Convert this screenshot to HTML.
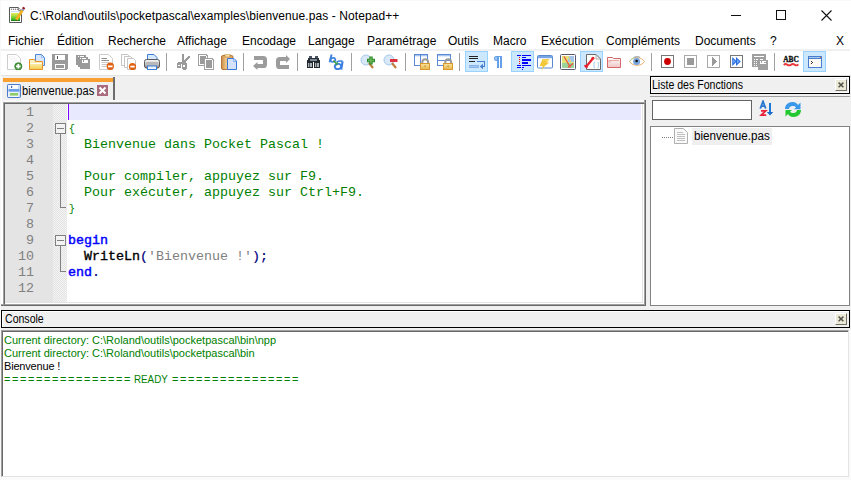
<!DOCTYPE html>
<html><head><meta charset="utf-8">
<style>
*{box-sizing:border-box;margin:0;padding:0}
html,body{width:851px;height:480px;overflow:hidden;background:#fff;font-family:"Liberation Sans",sans-serif;position:relative}
.a{position:absolute;display:block}
.t{position:absolute;white-space:pre;font-size:12px;line-height:14px;color:#000}
.m{position:absolute;white-space:pre;font-family:"Liberation Mono",monospace;font-size:13.33px;line-height:16px;left:68px}
.ln{position:absolute;white-space:pre;font-family:"Liberation Mono",monospace;font-size:13.33px;line-height:16px;color:#808080;text-align:right;left:5px;width:29px}
.cm{color:#008000}
.kw{color:#0000ff;-webkit-text-stroke:0.45px #0000ff}
.op{color:#000080;-webkit-text-stroke:0.2px #000080}
.id{color:#000;-webkit-text-stroke:0.35px #000}
.st{color:#808080}
.ct{position:absolute;white-space:pre;font-size:11px;line-height:13px;left:4px}
</style></head><body>
<div class="a" style="left:0;top:0;width:851px;height:1px;background:#f8f8f8"></div>
<div class="a" style="left:0;top:0;width:1px;height:480px;background:#f8f8f8"></div>
<!-- app icon -->
<svg class="a" style="left:6px;top:4px" width="22" height="22" viewBox="0 0 22 22">
<defs><linearGradient id="ag" x1="0" y1="0" x2="0" y2="1"><stop offset="0" stop-color="#e8e860"/><stop offset="0.35" stop-color="#a8dc40"/><stop offset="0.8" stop-color="#40b828"/><stop offset="1" stop-color="#107010"/></linearGradient></defs>
<path d="M3.5 3.5H12.5L15.5 6.5V18.5H3.5Z" fill="#fff" stroke="#5a5a5a"/>
<circle cx="5.5" cy="5.3" r="0.7" fill="#777"/><circle cx="7.5" cy="5.3" r="0.7" fill="#777"/><circle cx="9.5" cy="5.3" r="0.7" fill="#777"/><circle cx="11.5" cy="5.3" r="0.7" fill="#777"/>
<path d="M12.5 3.5V6.5H15.5" fill="#e8e8e8" stroke="#888"/>
<rect x="5" y="7.3" width="9" height="0.8" fill="#b8d0e8"/>
<rect x="5" y="9" width="9" height="8" fill="url(#ag)"/>
<path d="M10.3 15.8L16.6 6" stroke="#f0b020" stroke-width="2.8"/>
<path d="M9.6 17L10.3 15.6L11 16.2Z" fill="#604020"/>
<path d="M16.3 6.4L17.4 4.8" stroke="#8aa0b8" stroke-width="2.6"/>
<path d="M17.2 4.9L18.2 3.4" stroke="#a00818" stroke-width="2.6"/>
</svg>
<div class="t" style="left:30px;top:9px;letter-spacing:0.08px">C:\Roland\outils\pocketpascal\examples\bienvenue.pas - Notepad++</div>
<!-- window controls -->
<div class="a" style="left:731px;top:15px;width:10px;height:1px;background:#111"></div>
<div class="a" style="left:776px;top:10px;width:10px;height:10px;border:1px solid #111"></div>
<svg class="a" style="left:821px;top:10px" width="11" height="11" viewBox="0 0 11 11"><path d="M0.5 0.5L10.5 10.5M10.5 0.5L0.5 10.5" stroke="#111" stroke-width="1.1"/></svg>
<!-- menu -->
<div class="t" style="left:8px;top:34px">Fichier</div>
<div class="t" style="left:57px;top:34px">Édition</div>
<div class="t" style="left:108px;top:34px">Recherche</div>
<div class="t" style="left:177px;top:34px">Affichage</div>
<div class="t" style="left:242px;top:34px">Encodage</div>
<div class="t" style="left:308px;top:34px">Langage</div>
<div class="t" style="left:367px;top:34px">Paramétrage</div>
<div class="t" style="left:448px;top:34px">Outils</div>
<div class="t" style="left:493px;top:34px">Macro</div>
<div class="t" style="left:541px;top:34px">Exécution</div>
<div class="t" style="left:606px;top:34px">Compléments</div>
<div class="t" style="left:695px;top:34px">Documents</div>
<div class="t" style="left:770px;top:34px">?</div>
<div class="t" style="left:836px;top:34px">X</div>
<div class="a" style="left:1px;top:49px;width:849px;height:2px;background:#f0f0f0"></div>
<!-- toolbar -->
<svg class="a" style="left:7px;top:54px" width="16" height="16" viewBox="0 0 16 16"><path d="M0.5 0.5H9.5L13.5 4.5V15.5H0.5Z" fill="#fff" stroke="#cdcdcd"/>
<path d="M2 3H8M2 5H10M6 7H10" stroke="#ececec" stroke-width="0.8"/>
<circle cx="11.3" cy="12.3" r="3.6" fill="#4e9e40" stroke="#2c7a28" stroke-width="0.8"/>
<path d="M11.3 10V14.6M9 12.3H13.6" stroke="#fff" stroke-width="1.8"/></svg>
<svg class="a" style="left:29px;top:54px" width="16" height="16" viewBox="0 0 16 16"><defs><linearGradient id="og" x1="0" y1="0" x2="0" y2="1"><stop offset="0" stop-color="#fff6d0"/><stop offset="0.5" stop-color="#fbe79a"/><stop offset="1" stop-color="#f2cf50"/></linearGradient></defs>
<path d="M6.5 0.5H12.5L15.5 3.5V11.5H6.5Z" fill="#d8e6fc" stroke="#4f86d8"/>
<path d="M12.5 0.5V3.5H15.5" fill="none" stroke="#8ab4ec" stroke-width="0.8"/>
<path d="M0.5 5.5H5.5L6.5 7.5H13.5V15.5H0.5Z" fill="url(#og)" stroke="#e8922a"/>
<path d="M1.5 9.5H12.5" stroke="#fff" stroke-width="1"/></svg>
<svg class="a" style="left:52px;top:54px" width="16" height="16" viewBox="0 0 16 16" shape-rendering="crispEdges"><rect x="0" y="0" width="16" height="16" fill="#9a9a9a"/>
<rect x="3" y="1" width="10" height="5" fill="#fff"/>
<rect x="5" y="2" width="1" height="3" fill="#555"/>
<rect x="3" y="10" width="10" height="5" fill="#fff"/>
<rect x="4" y="11" width="8" height="3" fill="#9a9a9a"/>
<rect x="15" y="15" width="1" height="1" fill="#fff"/></svg>
<svg class="a" style="left:75px;top:54px" width="16" height="16" viewBox="0 0 16 16" shape-rendering="crispEdges"><rect x="1" y="1" width="10" height="10" fill="#9a9a9a"/>
<rect x="3" y="3" width="10" height="10" fill="#9a9a9a" stroke="#fff" stroke-width="0"/>
<rect x="5" y="5" width="10" height="10" fill="#9a9a9a"/>
<rect x="3" y="2" width="1" height="1" fill="#fff"/><rect x="5" y="2" width="4" height="1" fill="#fff"/>
<rect x="5" y="4" width="1" height="1" fill="#fff"/><rect x="7" y="4" width="4" height="1" fill="#fff"/>
<rect x="7" y="6" width="6" height="3" fill="#fff"/><rect x="8" y="6" width="1" height="2" fill="#9a9a9a"/></svg>
<svg class="a" style="left:98px;top:54px" width="16" height="16" viewBox="0 0 16 16"><path d="M1.5 0.5H10.5L14.5 4.5V15.5H1.5Z" fill="#fff" stroke="#cccccc"/>
<path d="M3.5 4.5H9M3.5 6.5H11" stroke="#808080" stroke-width="0.9"/><path d="M3.5 8.5H11M3.5 10.5H9M3.5 12.5H8" stroke="#c4c4c4" stroke-width="0.9"/>
<circle cx="12.3" cy="12.3" r="3.7" fill="#e06010"/>
<rect x="10" y="11.5" width="4.6" height="1.8" fill="#fff"/></svg>
<svg class="a" style="left:121px;top:54px" width="16" height="16" viewBox="0 0 16 16"><path d="M0.5 0.5H6.5L8.5 2.5V11.5H0.5Z" fill="#fff" stroke="#c4c4c4"/>
<path d="M3.5 2.5H9.5L11.5 4.5V13.5H3.5Z" fill="#fff" stroke="#c4c4c4"/>
<path d="M6.5 4.5H12.5L14.5 6.5V15.5H6.5Z" fill="#fff" stroke="#c4c4c4"/>
<circle cx="11.5" cy="12.5" r="3.6" fill="#e06010"/>
<rect x="9.3" y="11.7" width="4.4" height="1.8" fill="#fff"/></svg>
<svg class="a" style="left:144px;top:54px" width="16" height="16" viewBox="0 0 16 16"><defs><linearGradient id="pr" x1="0" y1="0" x2="0" y2="1"><stop offset="0" stop-color="#fafafa"/><stop offset="0.45" stop-color="#d0d0d0"/><stop offset="0.75" stop-color="#a8a8a8"/><stop offset="1" stop-color="#707070"/></linearGradient></defs>
<path d="M3.5 0.5H10L13 3.5V8H3.5Z" fill="#d8e8fc" stroke="#3d7fd6"/>
<rect x="0.5" y="5.5" width="15" height="8.5" rx="2" fill="url(#pr)" stroke="#5a5a5a" stroke-width="1"/>
<rect x="2" y="8" width="12" height="2.5" fill="#b8b8b8"/>
<rect x="3.5" y="12" width="9" height="3.5" fill="#eef4fc" stroke="#3d7fd6"/></svg>
<div class="a" style="left:166px;top:53px;width:1px;height:18px;background:#a0a0a0"></div>
<div class="a" style="left:243px;top:53px;width:1px;height:18px;background:#a0a0a0"></div>
<div class="a" style="left:297px;top:53px;width:1px;height:18px;background:#a0a0a0"></div>
<div class="a" style="left:351px;top:53px;width:1px;height:18px;background:#a0a0a0"></div>
<div class="a" style="left:405px;top:53px;width:1px;height:18px;background:#a0a0a0"></div>
<div class="a" style="left:459px;top:53px;width:1px;height:18px;background:#a0a0a0"></div>
<div class="a" style="left:651px;top:53px;width:1px;height:18px;background:#a0a0a0"></div>
<div class="a" style="left:774px;top:53px;width:1px;height:18px;background:#a0a0a0"></div>
<svg class="a" style="left:175px;top:54px" width="16" height="16" viewBox="0 0 16 16" shape-rendering="crispEdges"><rect x="7" y="0" width="2" height="9" fill="#9a9a9a"/>
<rect x="13" y="2" width="2" height="2" fill="#9a9a9a"/><rect x="12" y="3" width="2" height="2" fill="#9a9a9a"/>
<rect x="11" y="4" width="2" height="2" fill="#9a9a9a"/><rect x="10" y="5" width="2" height="2" fill="#9a9a9a"/>
<rect x="9" y="6" width="2" height="2" fill="#9a9a9a"/><rect x="8" y="7" width="2" height="2" fill="#9a9a9a"/>
<rect x="3" y="8" width="8" height="2" fill="#9a9a9a"/>
<rect x="2" y="9" width="4" height="5" fill="#9a9a9a"/><rect x="3" y="11" width="2" height="1" fill="#fff"/>
<rect x="7" y="9" width="5" height="6" fill="#9a9a9a"/><rect x="8" y="11" width="2" height="2" fill="#fff"/>
<rect x="8" y="15" width="3" height="1" fill="#9a9a9a"/></svg>
<svg class="a" style="left:198px;top:54px" width="16" height="16" viewBox="0 0 16 16" shape-rendering="crispEdges"><path d="M0 0H8L10 2V12H0Z" fill="#a0a0a0"/><path d="M1 1H7L9 3V11H1Z" fill="#fff"/><path d="M2 2H7L8 3V10H2Z" fill="#9a9a9a"/>
<path d="M6 4H14L16 6V16H6Z" fill="#a0a0a0"/><path d="M7 5H13L15 7V15H7Z" fill="#fff"/><path d="M8 6H13L14 7V14H8Z" fill="#9a9a9a"/></svg>
<svg class="a" style="left:221px;top:54px" width="16" height="16" viewBox="0 0 16 16"><defs><linearGradient id="pg" x1="0" x2="1"><stop offset="0" stop-color="#c88a48"/><stop offset="0.4" stop-color="#f0c888"/><stop offset="1" stop-color="#d89858"/></linearGradient></defs>
<rect x="0.5" y="1.5" width="11.5" height="14" rx="1.5" fill="url(#pg)" stroke="#b87838"/>
<rect x="4" y="0" width="5" height="3" fill="#f8e0a0" stroke="#c08040" stroke-width="0.6"/>
<path d="M6.5 4.5H13L15.5 7V15.5H6.5Z" fill="#d4e2fc" stroke="#3a78d8"/>
<path d="M12.5 4.5V7.5H15.5" fill="none" stroke="#7aa8e8" stroke-width="0.8"/></svg>
<svg class="a" style="left:252px;top:54px" width="16" height="16" viewBox="0 0 16 16"><path d="M2 2H11.3Q15 2 15 5.6V10.4Q15 14 11.3 14H5.5V16L1 12L5.5 8V10H10.5Q11 10 11 9.5V6.5Q11 6 10.5 6H2Z" fill="#9c9c9c"/></svg>
<svg class="a" style="left:275px;top:54px" width="16" height="16" viewBox="0 0 16 16"><path d="M11 3H4.7Q1 3 1 6.6V11.4Q1 15 4.7 15H14V11H5.5Q5 11 5 10.5V7.5Q5 7 5.5 7H11V9L15 5L11 1Z" fill="#9c9c9c"/></svg>
<svg class="a" style="left:306px;top:54px" width="16" height="16" viewBox="0 0 16 16" shape-rendering="crispEdges"><rect x="3" y="2" width="3" height="3" fill="#4a5260"/><rect x="9" y="2" width="3" height="3" fill="#4a5260"/>
<rect x="2" y="4" width="11" height="4" fill="#2a3038"/>
<rect x="1" y="6" width="6" height="8" fill="#22282e"/><rect x="8" y="6" width="6" height="8" fill="#22282e"/>
<rect x="4" y="5" width="7" height="2" fill="#7a8898"/>
<rect x="2" y="9" width="4" height="4" fill="#a8b0b8"/><rect x="9" y="9" width="4" height="4" fill="#a8b0b8"/>
<rect x="3" y="9" width="1" height="4" fill="#505860"/><rect x="10" y="9" width="1" height="4" fill="#505860"/></svg>
<svg class="a" style="left:328px;top:54px" width="18" height="16" viewBox="0 0 18 16"><path d="M3.6 0.5L1.6 8.2" stroke="#3b7fe0" stroke-width="1.9"/>
<ellipse cx="5" cy="5.9" rx="2.4" ry="2" fill="none" stroke="#3b7fe0" stroke-width="1.6" transform="rotate(-15 5 5.9)"/>
<path d="M8.6 8.2Q11.5 6.3 14.6 7.4" fill="none" stroke="#3b7fe0" stroke-width="1.7"/>
<ellipse cx="10" cy="12.5" rx="3.2" ry="2.6" fill="none" stroke="#3b7fe0" stroke-width="1.9" transform="rotate(-15 10 12.5)"/>
<path d="M14.6 7.3L13.2 15.6" stroke="#3b7fe0" stroke-width="2.1"/>
<path d="M5.3 6.5L8.6 9.8" stroke="#40a040" stroke-width="1.6"/><path d="M6.8 10.8H9.8V7.8Z" fill="#40a040"/></svg>
<svg class="a" style="left:360px;top:54px" width="16" height="16" viewBox="0 0 16 16"><circle cx="6" cy="6" r="5" fill="#d8e8f8" stroke="#a8c8e8"/>
<path d="M9 9L13 14" stroke="#c08040" stroke-width="2.2"/>
<path d="M11 2.5V10.5M7 6.5H15" stroke="#2e8a2e" stroke-width="3.4"/><path d="M11 3.5V9.5M8 6.5H14" stroke="#6ab85a" stroke-width="1.4"/></svg>
<svg class="a" style="left:383px;top:54px" width="16" height="16" viewBox="0 0 16 16"><circle cx="6" cy="6" r="5" fill="#d8e8f8" stroke="#a8c8e8"/>
<path d="M9 9L13 14" stroke="#c08040" stroke-width="2.2"/>
<rect x="7" y="5" width="7.5" height="3" fill="#e03040"/></svg>
<svg class="a" style="left:414px;top:54px" width="16" height="16" viewBox="0 0 16 16"><rect x="0.5" y="0.5" width="13" height="11" fill="#fff" stroke="#5a8ad8"/>
<rect x="1" y="1" width="12" height="1.3" fill="#a8c4ee"/><path d="M6.5 1V11.5" stroke="#5a8ad8"/><defs><linearGradient id="lk1" x1="0" y1="0" x2="0" y2="1"><stop offset="0" stop-color="#f8e4a0"/><stop offset="1" stop-color="#e8b448"/></linearGradient></defs>
<path d="M8.3 10V8.2A2.9 2.9 0 0 1 14.1 8.2V10" fill="none" stroke="#9a9a9a" stroke-width="2"/>
<rect x="6.5" y="9.5" width="9" height="6" fill="url(#lk1)" stroke="#d89a30" stroke-width="1"/>
<rect x="10.5" y="11.5" width="1.2" height="1.5" fill="#c08830"/></svg>
<svg class="a" style="left:437px;top:54px" width="16" height="16" viewBox="0 0 16 16"><rect x="0.5" y="0.5" width="13" height="11" fill="#fff" stroke="#5a8ad8"/>
<rect x="1" y="1" width="12" height="1.3" fill="#a8c4ee"/><path d="M1 6.5H13" stroke="#5a8ad8"/><defs><linearGradient id="lk2" x1="0" y1="0" x2="0" y2="1"><stop offset="0" stop-color="#f8e4a0"/><stop offset="1" stop-color="#e8b448"/></linearGradient></defs>
<path d="M8.3 10V8.2A2.9 2.9 0 0 1 14.1 8.2V10" fill="none" stroke="#9a9a9a" stroke-width="2"/>
<rect x="6.5" y="9.5" width="9" height="6" fill="url(#lk2)" stroke="#d89a30" stroke-width="1"/>
<rect x="10.5" y="11.5" width="1.2" height="1.5" fill="#c08830"/></svg>
<div class="a" style="left:465px;top:51px;width:23px;height:21px;background:#cce8ff;border:1px solid #99d1ff"></div>
<div class="a" style="left:511px;top:51px;width:23px;height:21px;background:#cce8ff;border:1px solid #99d1ff"></div>
<div class="a" style="left:580px;top:51px;width:23px;height:21px;background:#cce8ff;border:1px solid #99d1ff"></div>
<div class="a" style="left:803px;top:51px;width:23px;height:21px;background:#cce8ff;border:1px solid #99d1ff"></div>
<svg class="a" style="left:469px;top:54px" width="16" height="16" viewBox="0 0 16 16"><rect x="0" y="2" width="9" height="1" fill="#222"/><rect x="0" y="4" width="9" height="1" fill="#222"/>
<rect x="0" y="7" width="6" height="1" fill="#222"/>
<rect x="8" y="7" width="8" height="1" fill="#4a7ccc"/><rect x="15" y="7" width="1" height="6" fill="#4a7ccc"/>
<rect x="13" y="12" width="3" height="1" fill="#4a7ccc"/>
<path d="M10.8 12.5L14 9.8V15.2Z" fill="#4a7ccc"/>
<rect x="0" y="11" width="10" height="3" fill="#86b2ea"/><rect x="0" y="12" width="10" height="1" fill="#a4c6f0"/></svg>
<svg class="a" style="left:491px;top:54px" width="16" height="16" viewBox="0 0 16 16"><path d="M5 2H11V14H9V3H8V14H6V7H5C3.7 7 3 6 3 4.5C3 3 3.7 2 5 2Z" fill="#64a0ea"/><path d="M5 3H6V6H5C4.3 6 4 5.3 4 4.5C4 3.7 4.3 3 5 3Z" fill="#9cc4f4"/></svg>
<svg class="a" style="left:514px;top:54px" width="17" height="16" viewBox="0 0 17 16" shape-rendering="crispEdges"><rect x="3" y="1" width="4" height="1" fill="#0000ff"/><rect x="8" y="1" width="9" height="1" fill="#0000ff"/>
<rect x="8" y="3" width="4" height="1" fill="#0000ff"/>
<rect x="8" y="5" width="9" height="2" fill="#0000ff"/>
<rect x="8" y="8" width="6" height="2" fill="#0000ff"/>
<rect x="3" y="11" width="4" height="1" fill="#0000ff"/><rect x="8" y="11" width="9" height="1" fill="#0000ff"/>
<rect x="3" y="13" width="4" height="1" fill="#0000ff"/><rect x="8" y="13" width="2" height="1" fill="#0000ff"/>
<rect x="8" y="15" width="1" height="1" fill="#0000ff"/>
<rect x="5" y="3" width="1" height="1" fill="#ff0000"/><rect x="5" y="5" width="1" height="1" fill="#ff0000"/>
<rect x="5" y="7" width="1" height="1" fill="#ff0000"/><rect x="5" y="9" width="1" height="1" fill="#ff0000"/></svg>
<svg class="a" style="left:537px;top:54px" width="16" height="16" viewBox="0 0 16 16"><rect x="0.5" y="1.5" width="15" height="12.5" rx="1" fill="#fff" stroke="#5a88d0"/>
<rect x="1" y="2" width="14" height="2.2" fill="#78a4e4"/>
<path d="M5.5 5H12.5L10 8.5H12.3L6.5 13.2L4.8 16L5.6 12H2.6Z" fill="#f2c838"/>
<path d="M6 6H11L9 8.5" fill="none" stroke="#fae080" stroke-width="0.8"/></svg>
<svg class="a" style="left:560px;top:54px" width="16" height="16" viewBox="0 0 16 16"><rect x="0.5" y="0.5" width="15" height="15" rx="1" fill="#fff" stroke="#585870"/>
<rect x="2" y="2" width="12" height="12" fill="#e2e27a"/>
<rect x="8" y="2" width="6" height="6" fill="#a4c4ec"/>
<rect x="2" y="9" width="12" height="5" fill="#9ad49a"/>
<path d="M4 2.5L10.5 13.5M13 9.5L8 13.5" stroke="#ee5040" stroke-width="1.3"/>
<path d="M8 2L11 8" stroke="#f0e060" stroke-width="1"/></svg>
<svg class="a" style="left:584px;top:54px" width="18" height="16" viewBox="0 0 18 16"><path d="M2.5 0.5H12L16.5 5V15.5H2.5Z" fill="#fffdf8" stroke="#6a6a6a"/>
<path d="M12 0.5V5H16.5" fill="none" stroke="#9a9a9a" stroke-width="0.8"/>
<path d="M1.5 13.5L8.5 5" stroke="#e82030" stroke-width="2.2"/>
<circle cx="8.9" cy="4.3" r="1.5" fill="#e82030"/>
<path d="M0.5 11.2L3.5 13.6" stroke="#e82030" stroke-width="2"/>
<path d="M11 8Q10 8 10 9.5V10.5L9.5 11L10 11.5V12.5Q10 14 11 14" fill="none" stroke="#90c4f0" stroke-width="0.9"/>
<path d="M13.5 8Q14.5 8 14.5 9.5V10.5L15 11L14.5 11.5V12.5Q14.5 14 13.5 14" fill="none" stroke="#90c4f0" stroke-width="0.9"/></svg>
<svg class="a" style="left:606px;top:54px" width="16" height="16" viewBox="0 0 16 16"><defs><linearGradient id="fw" x1="0" y1="0" x2="0" y2="1"><stop offset="0" stop-color="#fff"/><stop offset="1" stop-color="#f0c4c4"/></linearGradient></defs>
<path d="M1.5 3.5H6.5L7.5 4.5H14.5V13.5H1.5Z" fill="url(#fw)" stroke="#d46868"/>
<path d="M2.5 6.5H13" stroke="#e8a8a8" stroke-width="1"/><rect x="2" y="7" width="3" height="1.5" fill="#f0c0c0"/></svg>
<svg class="a" style="left:629px;top:54px" width="16" height="16" viewBox="0 0 16 16"><path d="M0.5 7.5C3 2.5 13 2.5 15.5 7.5C13 12.5 3 12.5 0.5 7.5Z" fill="#fff" stroke="#e8b070" stroke-width="1"/>
<path d="M0.8 7.5C2 5 4 3.8 6 3.4" fill="none" stroke="#a8d8a0" stroke-width="1"/>
<circle cx="7.6" cy="7.4" r="3.5" fill="#78a4dc"/><circle cx="7.6" cy="7" r="1.3" fill="#111"/>
<path d="M5 3.3Q8 2.3 11 3.3" stroke="#b0b0b0" stroke-width="1.4" fill="none"/></svg>
<svg class="a" style="left:661px;top:55px" width="13" height="13" viewBox="0 0 13 13" shape-rendering="crispEdges"><rect x="0.5" y="0.5" width="12" height="12" fill="#fff" stroke="#777"/></svg>
<svg class="a" style="left:661px;top:55px" width="13" height="13" viewBox="0 0 13 13"><circle cx="6.5" cy="6.5" r="3.4" fill="#cc0000"/></svg>
<svg class="a" style="left:684px;top:55px" width="13" height="13" viewBox="0 0 13 13" shape-rendering="crispEdges"><rect x="0.5" y="0.5" width="12" height="12" fill="#fff" stroke="#aaa"/><rect x="3" y="3" width="7" height="7" fill="#9a9a9a"/></svg>
<svg class="a" style="left:707px;top:55px" width="13" height="13" viewBox="0 0 13 13" shape-rendering="crispEdges"><rect x="0.5" y="0.5" width="12" height="12" fill="#fff" stroke="#aaa"/><path d="M5 2L10 6.5L5 11Z" fill="#9a9a9a"/></svg>
<svg class="a" style="left:730px;top:55px" width="13" height="13" viewBox="0 0 13 13"><rect x="0.5" y="0.5" width="12" height="12" fill="#fff" stroke="#777"/><path d="M2.2 2L7 6.5L2.2 11ZM6 2L10.8 6.5L6 11Z" fill="#2a6ee0"/><path d="M3.2 4.5L5.5 6.5L3.2 8.5ZM7 4.5L9.3 6.5L7 8.5Z" fill="#7aaaf0"/></svg>
<svg class="a" style="left:752px;top:54px" width="16" height="16" viewBox="0 0 16 16" shape-rendering="crispEdges"><rect x="0" y="0" width="14" height="13" fill="#a0a0a0"/>
<rect x="6" y="6" width="10" height="10" fill="#a0a0a0"/>
<rect x="2" y="2" width="10" height="1" fill="#fff"/>
<rect x="2" y="5" width="1" height="1" fill="#fff"/><rect x="4" y="5" width="2" height="1" fill="#fff"/><rect x="8" y="5" width="3" height="1" fill="#fff"/>
<rect x="2" y="7" width="1" height="1" fill="#fff"/><rect x="4" y="7" width="1" height="1" fill="#fff"/>
<rect x="2" y="9" width="1" height="1" fill="#fff"/><rect x="4" y="9" width="1" height="1" fill="#fff"/>
<rect x="2" y="11" width="1" height="1" fill="#fff"/><rect x="4" y="11" width="1" height="1" fill="#fff"/>
<rect x="8" y="7" width="6" height="3" fill="#fff"/><rect x="9" y="7" width="1" height="2" fill="#a0a0a0"/><rect x="12" y="8" width="2" height="1" fill="#a0a0a0"/></svg>
<svg class="a" style="left:783px;top:54px" width="16" height="16" viewBox="0 0 16 16"><text x="8" y="8" text-anchor="middle" font-family="Liberation Serif" font-weight="bold" font-size="8.2" fill="#111" stroke="#111" stroke-width="0.35" textLength="15.5" lengthAdjust="spacingAndGlyphs">ABC</text>
<path d="M0.8 11Q2.5 9.3 4.3 10.7T8 10.7T11.7 10.7T15.5 10.5" stroke="#e83838" stroke-width="1.9" fill="none"/></svg>
<svg class="a" style="left:808px;top:56px" width="14" height="12" viewBox="0 0 14 12" shape-rendering="crispEdges"><rect x="0" y="0" width="14" height="12" fill="#4a7fd0"/>
<rect x="1" y="1" width="12" height="1" fill="#a8c8f0"/><rect x="12" y="1" width="1" height="1" fill="#f06020"/>
<rect x="1" y="3" width="12" height="8" fill="#fcf8f4"/>
<rect x="3" y="5" width="1" height="1" fill="#333"/><rect x="4" y="6" width="1" height="1" fill="#333"/><rect x="3" y="7" width="1" height="1" fill="#333"/></svg>
<div class="a" style="left:1px;top:75px;width:850px;height:1px;background:#e3e3e3"></div>
<!-- tab bar -->
<div class="a" style="left:2px;top:76px;width:647px;height:26px;background:#f0f0f0"></div>
<div class="a" style="left:113px;top:77px;width:2px;height:24px;background:#6d6d6d"></div>
<div class="a" style="left:3px;top:78px;width:110px;height:4px;background:#f9a030"></div>
<svg class="a" style="left:7px;top:84px" width="14" height="14" viewBox="0 0 14 14">
<rect x="0.5" y="0.5" width="13" height="13" rx="0.8" fill="#c8dcf8" stroke="#4a7ccc"/>
<rect x="1" y="1" width="1.5" height="12" fill="#e8f0fc"/>
<rect x="2.5" y="1" width="8.5" height="3.8" fill="#fff"/>
<rect x="4" y="1.8" width="1.2" height="2.2" fill="#3a68b8"/>
<rect x="1.5" y="5" width="11" height="2.6" fill="#6c9ce4"/>
<rect x="2.5" y="8.2" width="9" height="4.8" fill="#f4f8fc"/>
<rect x="3" y="9" width="8" height="2.6" fill="#8ccc64"/>
</svg>
<div class="t" style="left:22px;top:84px;transform:scaleX(0.925);transform-origin:0 0">bienvenue.pas</div>
<svg class="a" style="left:97px;top:85px" width="11" height="11" viewBox="0 0 11 11">
<rect x="0" y="0" width="11" height="11" fill="#a86a7c"/>
<path d="M2.5 2.5L8.5 8.5M8.5 2.5L2.5 8.5" stroke="#fff" stroke-width="2"/>
</svg>
<!-- editor -->
<div class="a" style="left:646px;top:100px;width:4px;height:206px;background:#f0f0f0"></div>
<div class="a" style="left:3px;top:100px;width:641px;height:2px;background:#fafafa"></div>
<div class="a" style="left:644px;top:100px;width:1px;height:2px;background:#a0a0a0"></div><div class="a" style="left:645px;top:100px;width:1px;height:2px;background:#696969"></div>
<div class="a" style="left:3px;top:102px;width:643px;height:204px;background:#fff;border-top:1px solid #a0a0a0;border-left:1px solid #a0a0a0;border-right:1px solid #696969;border-bottom:1px solid #696969"></div>
<div class="a" style="left:4px;top:103px;width:641px;height:202px;border-top:1px solid #696969;border-left:1px solid #696969;border-right:1px solid #a0a0a0;border-bottom:1px solid #a0a0a0"></div>
<div class="a" style="left:1px;top:304px;width:2px;height:1px;background:#a0a0a0"></div>
<div class="a" style="left:1px;top:305px;width:2px;height:1px;background:#696969"></div>
<div class="a" style="left:642px;top:104px;width:1px;height:199px;background:#e3e3e3"></div>
<div class="a" style="left:5px;top:302px;width:638px;height:1px;background:#e3e3e3"></div>
<div class="a" style="left:5px;top:104px;width:48px;height:198px;background:#e4e4e4"></div>
<div class="a" style="left:53px;top:104px;width:14px;height:198px;background-color:#f3f3f3;background-image:linear-gradient(45deg,#e4e4e4 25%,transparent 25%,transparent 75%,#e4e4e4 75%),linear-gradient(45deg,#e4e4e4 25%,transparent 25%,transparent 75%,#e4e4e4 75%);background-size:2px 2px;background-position:0 0,1px 1px"></div>
<div class="a" style="left:68px;top:104px;width:573px;height:16px;background:#e8e8ff"></div>
<div class="a" style="left:68px;top:104px;width:1px;height:16px;background:#8000ff"></div>
<!-- fold markers -->
<div class="a" style="left:55px;top:123px;width:11px;height:11px;border:1px solid #808080;background:#f3f3f3"></div>
<div class="a" style="left:57px;top:128px;width:7px;height:1px;background:#808080"></div>
<div class="a" style="left:60px;top:134px;width:1px;height:74px;background:#808080"></div>
<div class="a" style="left:60px;top:207px;width:6px;height:1px;background:#808080"></div>
<div class="a" style="left:55px;top:235px;width:11px;height:11px;border:1px solid #808080;background:#f3f3f3"></div>
<div class="a" style="left:57px;top:240px;width:7px;height:1px;background:#808080"></div>
<div class="a" style="left:60px;top:246px;width:1px;height:26px;background:#808080"></div>
<div class="a" style="left:60px;top:271px;width:6px;height:1px;background:#808080"></div>
<!-- line numbers -->
<div class="ln" style="top:105px">1
2
3
4
5
6
7
8
9
10
11
12</div>
<div class="m" style="top:105px"><span class="cm"></span>
<span class="cm" style="display:inline-block;width:8px;text-align:center;font-size:10.5px">{</span>
<span class="cm">  Bienvenue dans Pocket Pascal !</span>

<span class="cm">  Pour compiler, appuyez sur F9.</span>
<span class="cm">  Pour exécuter, appuyez sur Ctrl+F9.</span>
<span class="cm" style="display:inline-block;width:8px;text-align:center;font-size:10.5px">}</span>

<span class="kw">begin</span>
  <span class="id">WriteLn</span><span class="op">(</span><span class="st">'Bienvenue !'</span><span class="op">);</span>
<span class="kw">end</span><span class="op">.</span>
</div>
<!-- function list -->
<div class="a" style="left:649px;top:76px;width:202px;height:232px;background:#f0f0f0"></div>
<div class="a" style="left:650px;top:76px;width:200px;height:18px;border:1px solid #000;background:#f0f0f0"></div>
<div class="a" style="left:651px;top:77px;width:198px;height:16px;border:1px solid #fff"></div>
<div class="t" style="left:652px;top:78px;font-size:12px;transform:scaleX(0.88);transform-origin:0 0">Liste des Fonctions</div>
<div class="a" style="left:835px;top:79px;width:12px;height:12px;background:#ece9d8;border-top:1px solid #fff;border-left:1px solid #fff;border-right:1px solid #716f64;border-bottom:1px solid #716f64"></div>
<svg class="a" style="left:838px;top:82px" width="6" height="6" viewBox="0 0 6 6"><path d="M0.6 0.6L5.4 5.2M5.4 0.6L0.6 5.2" stroke="#55554c" stroke-width="1.5"/></svg>
<div class="a" style="left:650px;top:96px;width:200px;height:1px;background:#a0a0a0"></div>
<div class="a" style="left:652px;top:100px;width:100px;height:20px;background:#fff;border:1px solid #646464"></div>
<svg class="a" style="left:759px;top:100px" width="16" height="17" viewBox="0 0 16 17">
<path d="M1.3 8.6L4 1.3L6.7 8.6M2.2 6.2H5.8" fill="none" stroke="#2a78d0" stroke-width="1.8"/>
<path d="M2 10.8H6.8L2.2 15.2H7.2" fill="none" stroke="#e8203a" stroke-width="1.7"/>
<path d="M11 3V12" stroke="#1a7ad8" stroke-width="2"/>
<path d="M7.8 12H14.2L11 15.6Z" fill="#1a6ac8"/>
</svg>
<svg class="a" style="left:784px;top:101px" width="18" height="17" viewBox="0 0 18 17">
<path d="M1 8C1 4 4 1 8.5 1C11.5 1 13.3 2.5 14 4L16.5 1.5V8.2H10L12 6.3C11.3 5.5 10.2 5 8.5 5C6.5 5 5.2 6.3 5 8Z" fill="#3a98e8"/>
<path d="M1 1.2L1 1.2" stroke="none"/>
<path d="M17 9C17 13 14 16 9.5 16C6.5 16 4.7 14.5 4 13L1.5 15.5V9H8L6 10.8C6.7 11.6 7.8 12 9.5 12C11.5 12 12.8 10.8 13 9Z" fill="#22c830"/>
</svg>
<div class="a" style="left:650px;top:126px;width:200px;height:180px;background:#fff;border:1px solid #828282"></div>
<div class="a" style="left:662px;top:137px;width:11px;height:1px;background-image:linear-gradient(90deg,#808080 50%,transparent 50%);background-size:2px 1px"></div>
<svg class="a" style="left:674px;top:128px" width="14" height="16" viewBox="0 0 14 16">
<path d="M0.5 0.5H9.5L13.5 4.5V15.5H0.5Z" fill="#fafafa" stroke="#b0b0b0"/>
<path d="M3 4.5H9M3 6.5H11M3 8.5H11M3 10.5H11M3 12.5H11" stroke="#c0c0c0"/>
</svg>
<div class="a" style="left:692px;top:128px;width:80px;height:17px;background:#efefef"></div>
<div class="t" style="left:694px;top:129px;transform:scaleX(0.97);transform-origin:0 0">bienvenue.pas</div>
<!-- console -->
<div class="a" style="left:1px;top:306px;width:850px;height:174px;background:#f0f0f0"></div>
<div class="a" style="left:1px;top:310px;width:849px;height:18px;border:1px solid #000;background:#f0f0f0"></div>
<div class="a" style="left:2px;top:311px;width:847px;height:16px;border-top:1px solid #fff;border-left:1px solid #fff"></div>
<div class="t" style="left:5px;top:312px;transform:scaleX(0.88);transform-origin:0 0">Console</div>
<div class="a" style="left:835px;top:313px;width:12px;height:12px;background:#ece9d8;border-top:1px solid #fff;border-left:1px solid #fff;border-right:1px solid #716f64;border-bottom:1px solid #716f64"></div>
<svg class="a" style="left:838px;top:316px" width="6" height="6" viewBox="0 0 6 6"><path d="M0.6 0.6L5.4 5.2M5.4 0.6L0.6 5.2" stroke="#55554c" stroke-width="1.5"/></svg>
<div class="a" style="left:1px;top:476px;width:850px;height:4px;background:#fafafa"></div>
<div class="a" style="left:849px;top:330px;width:2px;height:150px;background:#fafafa"></div>
<div class="a" style="left:1px;top:330px;width:848px;height:147px;background:#fff;border-top:1px solid #a0a0a0;border-left:1px solid #a0a0a0;border-right:1px solid #e3e3e3;border-bottom:1px solid #e3e3e3"></div>
<div class="a" style="left:2px;top:331px;width:846px;height:145px;border-top:1px solid #696969;border-left:1px solid #696969"></div>
<div class="ct" style="top:334px;color:#008000">Current directory: C:\Roland\outils\pocketpascal\bin\npp</div>
<div class="ct" style="top:347px;color:#008000">Current directory: C:\Roland\outils\pocketpascal\bin</div>
<div class="ct" style="top:360px;color:#000;letter-spacing:-0.18px">Bienvenue !</div>
<div class="ct" style="top:373px;color:#008000;letter-spacing:1.58px">================</div>
<div class="ct" style="top:373px;left:134px;color:#008000;transform:scaleX(0.89);transform-origin:0 0">READY</div>
<div class="ct" style="top:373px;left:172px;color:#008000;letter-spacing:1.58px">================</div>
</body></html>
